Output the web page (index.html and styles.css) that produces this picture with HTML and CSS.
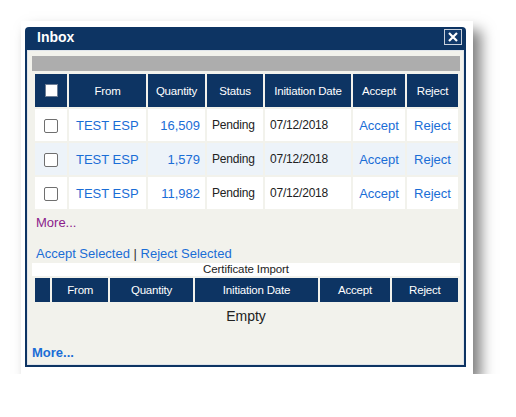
FILE: index.html
```html
<!DOCTYPE html>
<html>
<head>
<meta charset="utf-8">
<link rel="stylesheet" href="styles.css">
</head>
<body>
<div class="frame">
  <div class="window">
    <div class="titlebar">
      <span class="title">Inbox</span>
      <span class="close"><svg width="12" height="10" viewBox="0 0 12 10"><path d="M2 1 L10 9 M10 1 L2 9" stroke="#fff" stroke-width="2.2" fill="none"/></svg></span>
    </div>
    <div class="body">
      <div class="greybar"></div>
      <table class="grid inbox">
        <colgroup>
          <col style="width:32px"><col style="width:77px"><col style="width:57px"><col style="width:56px"><col style="width:86px"><col style="width:52px"><col style="width:51px">
        </colgroup>
        <thead>
          <tr>
            <th><span class="hcheck"></span></th>
            <th>From</th><th>Quantity</th><th>Status</th><th>Initiation Date</th><th>Accept</th><th>Reject</th>
          </tr>
        </thead>
        <tbody>
          <tr>
            <td class="c"><span class="check"></span></td>
            <td class="from"><a>TEST ESP</a></td>
            <td class="qty"><a>16,509</a></td>
            <td class="small">Pending</td>
            <td class="small date">07/12/2018</td>
            <td class="c"><a>Accept</a></td>
            <td class="c"><a>Reject</a></td>
          </tr>
          <tr class="alt">
            <td class="c"><span class="check"></span></td>
            <td class="from"><a>TEST ESP</a></td>
            <td class="qty"><a>1,579</a></td>
            <td class="small">Pending</td>
            <td class="small date">07/12/2018</td>
            <td class="c"><a>Accept</a></td>
            <td class="c"><a>Reject</a></td>
          </tr>
          <tr>
            <td class="c"><span class="check"></span></td>
            <td class="from"><a>TEST ESP</a></td>
            <td class="qty"><a>11,982</a></td>
            <td class="small">Pending</td>
            <td class="small date">07/12/2018</td>
            <td class="c"><a>Accept</a></td>
            <td class="c"><a>Reject</a></td>
          </tr>
        </tbody>
      </table>
      <div class="more-purple">More...</div>
      <div class="actions"><a>Accept Selected</a> | <a>Reject Selected</a></div>
      <div class="certbar">Certificate Import</div>
      <table class="grid cert">
        <colgroup>
          <col style="width:15px"><col style="width:56px"><col style="width:82px"><col style="width:123px"><col style="width:69px"><col style="width:66px">
        </colgroup>
        <thead>
          <tr><th></th><th>From</th><th>Quantity</th><th>Initiation Date</th><th>Accept</th><th>Reject</th></tr>
        </thead>
      </table>
      <div class="empty">Empty</div>
      <div class="more-blue">More...</div>
    </div>
  </div>
</div>
</body>
</html>
```

FILE: styles.css
```css
html, body {
  margin: 0;
  padding: 0;
  background: #ffffff;
}
body {
  font-family: "Liberation Sans", Arial, sans-serif;
}
.frame {
  margin: 21px 0 0 21px;
  width: 452px;
  height: 353px;
  box-sizing: border-box;
  padding: 6px 7px 7px 4px;
  background: #ffffff;
  box-shadow: 8px 9px 13px rgba(0, 0, 0, 0.5);
}
.window {
  width: 441px;
  height: 340px;
  box-sizing: border-box;
  background: #0d3463;
  border-radius: 4px 4px 0 0;
  padding: 0 2px 2px 2px;
  display: flex;
  flex-direction: column;
}
.titlebar {
  height: 23px;
  flex: none;
  display: flex;
  align-items: flex-start;
  justify-content: space-between;
  padding: 0 2px 0 10px;
}
.title {
  color: #ffffff;
  font-weight: bold;
  font-size: 14px;
  line-height: 14px;
  margin-top: 3px;
}
.close {
  margin-top: 2px;
  width: 18px;
  height: 16px;
  box-sizing: border-box;
  border: 1px solid #c9d1dc;
  display: flex;
  align-items: center;
  justify-content: center;
  background: #123a6b;
}
.body {
  flex: 1;
  background: #f2f2ec;
  border: 1px solid #dfe4ea;
  padding: 5px 3px 0 4px;
  display: flex;
  flex-direction: column;
}
.greybar {
  height: 15px;
  background: #adadad;
}
.grid {
  border-collapse: separate;
  border-spacing: 2px;
  table-layout: fixed;
  width: 427px;
  margin-left: 1px;
}
.inbox {
  margin-top: 1px;
}
.grid th {
  background: #0d3463;
  color: #ffffff;
  font-weight: normal;
  font-size: 11.5px;
  letter-spacing: -0.2px;
  text-align: center;
  padding: 0;
}
.inbox th {
  height: 33px;
}
.cert th {
  height: 24px;
}
.inbox td {
  height: 32px;
  background: #ffffff;
  padding: 0;
  font-size: 13px;
  color: #222;
  white-space: nowrap;
}
.inbox tr.alt td {
  background: #edf3f9;
}
a {
  color: #1a6dd6;
}
.inbox td.c {
  text-align: center;
}
.inbox td.from {
  padding-left: 7px;
}
.inbox td.qty {
  text-align: right;
  padding-right: 5px;
}
.inbox td.small {
  font-size: 12px;
  padding-left: 5px;
  color: #222;
  letter-spacing: -0.2px;
}
.hcheck {
  display: inline-block;
  width: 13px;
  height: 13px;
  box-sizing: border-box;
  background: #ffffff;
  border: 1px solid #6d7e96;
  vertical-align: middle;
}
.check {
  display: inline-block;
  width: 14px;
  height: 14px;
  box-sizing: border-box;
  background: #ffffff;
  border: 1px solid #6f6f6f;
  border-radius: 2px;
  vertical-align: middle;
}
.more-purple {
  margin-top: 4px;
  padding-left: 4px;
  font-size: 13px;
  line-height: 16px;
  color: #8b1c8b;
}
.actions {
  margin-top: 15px;
  padding-left: 4px;
  font-size: 13px;
  line-height: 16px;
  color: #333;
}
.certbar {
  margin-top: 1px;
  height: 13px;
  background: #ffffff;
  font-size: 11.5px;
  line-height: 13px;
  text-align: center;
  color: #222;
  letter-spacing: -0.1px;
}
.cert {
  margin-top: 0;
}
.empty {
  margin-top: 4px;
  text-align: center;
  font-size: 14px;
  line-height: 16px;
  color: #222;
}
.more-blue {
  margin-top: 21px;
  font-size: 13px;
  font-weight: bold;
  line-height: 16px;
  color: #1a6dd6;
}
```
